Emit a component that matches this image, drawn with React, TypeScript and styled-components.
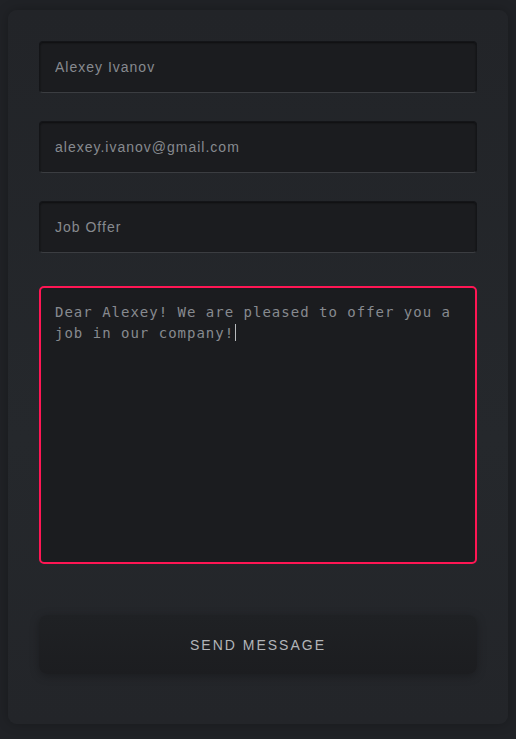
import styled, { createGlobalStyle } from "styled-components"

const GlobalStyle = createGlobalStyle`
  html, body {
    margin: 0;
    padding: 0;
    background: #202226;
  }
  body {
    font-family: "Liberation Sans", Arial, sans-serif;
  }
`;

const Page = styled.div`
  padding: 10px 8px 15px 8px;
`;

const Card = styled.form`
  display: flex;
  flex-direction: column;
  padding: 31px 31px 50px 31px;
  border-radius: 9px;
  background: linear-gradient(180deg, #222428 0%, #25282c 60%, #232529 100%);
  box-shadow: 0 0 12px rgba(0, 0, 0, 0.25);
`;

const Field = styled.input`
  box-sizing: border-box;
  height: 52px;
  margin-bottom: 28px;
  padding: 0 15px;
  border: 1px solid #141518;
  border-bottom-color: #3b3d41;
  border-radius: 4px;
  background: #1b1c1f;
  box-shadow: inset 0 1px 2px rgba(0, 0, 0, 0.5);
  color: #878a8f;
  font-family: "Liberation Sans", Arial, sans-serif;
  font-size: 14px;
  letter-spacing: 1px;
  outline: none;
`;

const Message = styled.div`
  box-sizing: border-box;
  height: 278px;
  margin-top: 5px;
  padding: 14px 14px;
  border: 2px solid #ff1654;
  border-radius: 5px;
  background: #1b1c1f;
  color: #878a8f;
  font-family: "DejaVu Sans Mono", "Liberation Mono", monospace;
  font-size: 14px;
  line-height: 21px;
  letter-spacing: 1px;
`;

const Caret = styled.span`
  display: inline-block;
  width: 1px;
  height: 17px;
  margin-left: 1px;
  vertical-align: -3px;
  background: #b8babd;
`;

const SendButton = styled.button`
  height: 59px;
  margin-top: 51px;
  border: none;
  border-radius: 8px;
  background: linear-gradient(180deg, #1f2124 0%, #1c1d20 100%);
  box-shadow: 0 2px 10px rgba(0, 0, 0, 0.25);
  color: #b2b5b9;
  font-family: "Liberation Sans", Arial, sans-serif;
  font-size: 14px;
  letter-spacing: 2px;
  cursor: pointer;
`;

export default function App() {
  return (
    <Page>
      <GlobalStyle />
      <Card onSubmit={(e) => e.preventDefault()}>
        <Field defaultValue="Alexey Ivanov" readOnly />
        <Field defaultValue="alexey.ivanov@gmail.com" readOnly />
        <Field defaultValue="Job Offer" readOnly />
        <Message role="textbox">
          Dear Alexey! We are pleased to offer you a job in our company!
          <Caret />
        </Message>
        <SendButton type="submit">SEND MESSAGE</SendButton>
      </Card>
    </Page>
  )
}
